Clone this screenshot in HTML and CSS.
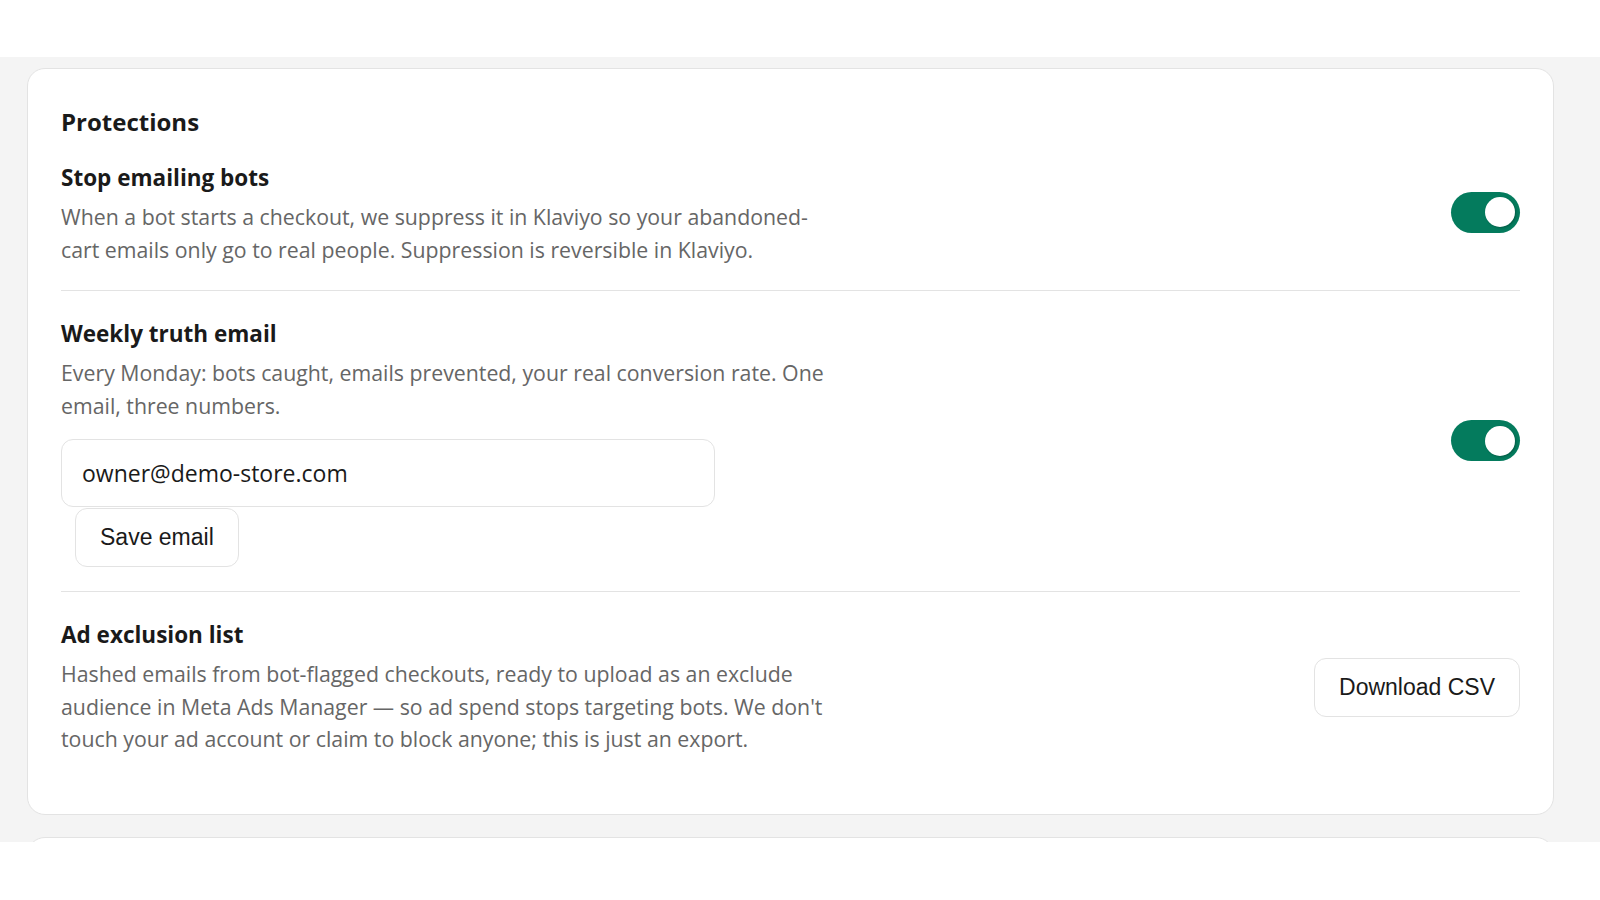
FILE: index.html
```html
<!DOCTYPE html>
<html lang="en">
<head>
    <meta charset="UTF-8">
    <meta name="viewport" content="width=device-width, initial-scale=1.0">
    <title>Protections</title>
    <link rel="stylesheet" href="styles.css">
</head>
<body>
    <header class="topbar"></header>

    <main class="frame">
        <section class="card">
            <h2 class="card-title">Protections</h2>

            <div class="setting">
                <div class="setting-text">
                    <h3>Stop emailing bots</h3>
                    <p>When a bot starts a checkout, we suppress it in Klaviyo so your abandoned-cart emails only go to real people. Suppression is reversible in Klaviyo.</p>
                </div>
                <button type="button" class="toggle" role="switch" aria-checked="true" aria-label="Stop emailing bots">
                    <span class="toggle-knob"></span>
                </button>
            </div>

            <div class="setting">
                <div class="setting-text">
                    <h3>Weekly truth email</h3>
                    <p>Every Monday: bots caught, emails prevented, your real conversion rate. One email, three numbers.</p>
                    <input type="email" class="email-field" id="report-email" value="owner@demo-store.com">
                    <button type="button" class="btn btn-save" id="save-email">Save email</button>
                </div>
                <button type="button" class="toggle" role="switch" aria-checked="true" aria-label="Weekly truth email">
                    <span class="toggle-knob"></span>
                </button>
            </div>

            <div class="setting">
                <div class="setting-text">
                    <h3>Ad exclusion list</h3>
                    <p>Hashed emails from bot-flagged checkouts, ready to upload as an exclude audience in Meta Ads Manager — so ad spend stops targeting bots. We don't touch your ad account or claim to block anyone; this is just an export.</p>
                </div>
                <button type="button" class="btn" id="download-csv">Download CSV</button>
            </div>
        </section>

        <section class="card card-more"></section>
    </main>
</body>
</html>
```

FILE: styles.css
```css
body {
    margin: 0;
    font-family: "Open Sans", "Noto Sans", sans-serif;
    color: #1a1a1a;
    background-color: #fff;
}
.topbar {
    height: 57px;
}
.frame {
    box-sizing: border-box;
    height: 785px;
    overflow: hidden;
    background-color: #f4f4f4;
    padding: 11px 46px 0 27px;
}
.card {
    background-color: #fff;
    border: 1px solid #e3e3e3;
    border-radius: 18px;
    padding: 36px 33px 34px;
}
.card-more {
    margin-top: 22px;
    height: 200px;
}
.card-title {
    margin: 0;
    font-size: 24px;
    line-height: 34px;
    font-weight: 700;
}
.setting {
    display: flex;
    align-items: center;
    justify-content: space-between;
    gap: 32px;
    padding: 28px 0 24px;
}
.setting:first-of-type {
    padding-top: 24px;
}
.setting + .setting {
    border-top: 1px solid #e3e3e3;
}
.setting-text {
    flex: 1;
    max-width: 780px;
}
.setting h3 {
    margin: 0 0 9px;
    font-size: 22.5px;
    line-height: 29px;
    font-weight: 700;
}
.setting p {
    margin: 0;
    font-size: 21.3px;
    line-height: 32.5px;
    color: #666;
}
.email-field {
    display: block;
    box-sizing: border-box;
    width: 654px;
    height: 68px;
    margin-top: 17px;
    padding: 0 20px;
    border: 1px solid #e3e3e3;
    border-radius: 12px;
    font-family: inherit;
    font-size: 23px;
    color: #1a1a1a;
    outline: none;
}
.btn {
    flex-shrink: 0;
    font-family: "Liberation Sans", Arial, sans-serif;
    font-size: 23px;
    line-height: 27px;
    padding: 15px 24px;
    background-color: #fff;
    color: #1a1a1a;
    border: 1px solid #e3e3e3;
    border-radius: 12px;
    cursor: pointer;
}
.btn-save {
    margin: 1px 0 0 14px;
}
.toggle {
    flex-shrink: 0;
    display: flex;
    align-items: center;
    justify-content: flex-end;
    width: 69px;
    height: 41px;
    margin-bottom: 5px;
    padding: 0 5px;
    border: none;
    border-radius: 21px;
    background-color: #047b5d;
    cursor: pointer;
}
.toggle-knob {
    width: 30px;
    height: 30px;
    border-radius: 50%;
    background-color: #fff;
    box-shadow: 1px 1px 2px rgba(0,0,0,0.25);
}
```
